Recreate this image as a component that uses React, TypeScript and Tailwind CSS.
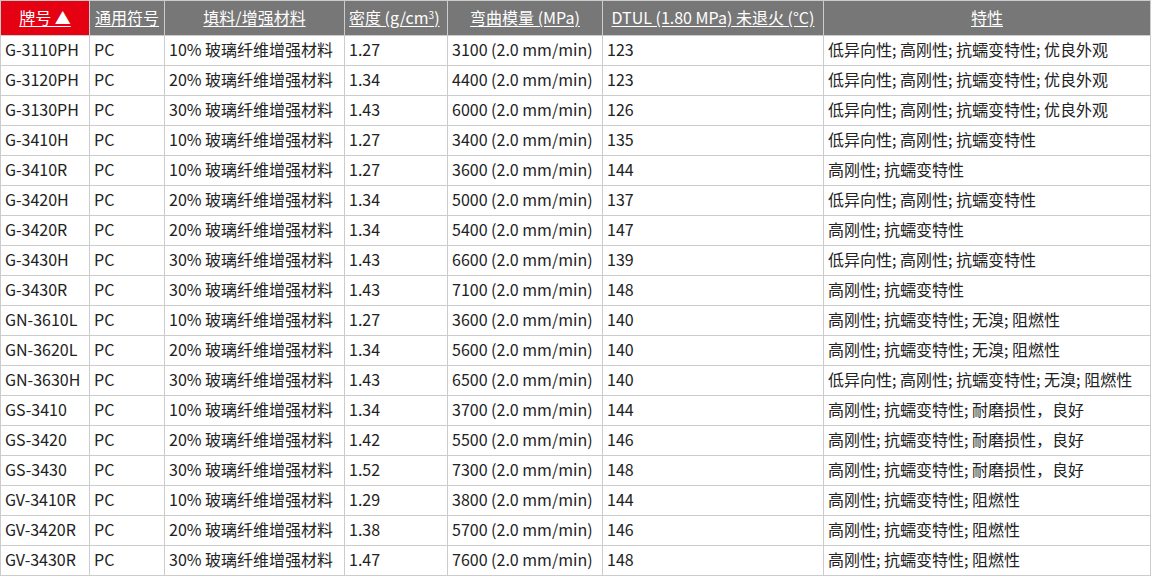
import React from 'react';

const rows: string[][] = [
  ['G-3110PH', 'PC', '10% 玻璃纤维增强材料', '1.27', '3100 (2.0 mm/min)', '123', '低异向性; 高刚性; 抗蠕变特性; 优良外观'],
  ['G-3120PH', 'PC', '20% 玻璃纤维增强材料', '1.34', '4400 (2.0 mm/min)', '123', '低异向性; 高刚性; 抗蠕变特性; 优良外观'],
  ['G-3130PH', 'PC', '30% 玻璃纤维增强材料', '1.43', '6000 (2.0 mm/min)', '126', '低异向性; 高刚性; 抗蠕变特性; 优良外观'],
  ['G-3410H', 'PC', '10% 玻璃纤维增强材料', '1.27', '3400 (2.0 mm/min)', '135', '低异向性; 高刚性; 抗蠕变特性'],
  ['G-3410R', 'PC', '10% 玻璃纤维增强材料', '1.27', '3600 (2.0 mm/min)', '144', '高刚性; 抗蠕变特性'],
  ['G-3420H', 'PC', '20% 玻璃纤维增强材料', '1.34', '5000 (2.0 mm/min)', '137', '低异向性; 高刚性; 抗蠕变特性'],
  ['G-3420R', 'PC', '20% 玻璃纤维增强材料', '1.34', '5400 (2.0 mm/min)', '147', '高刚性; 抗蠕变特性'],
  ['G-3430H', 'PC', '30% 玻璃纤维增强材料', '1.43', '6600 (2.0 mm/min)', '139', '低异向性; 高刚性; 抗蠕变特性'],
  ['G-3430R', 'PC', '30% 玻璃纤维增强材料', '1.43', '7100 (2.0 mm/min)', '148', '高刚性; 抗蠕变特性'],
  ['GN-3610L', 'PC', '10% 玻璃纤维增强材料', '1.27', '3600 (2.0 mm/min)', '140', '高刚性; 抗蠕变特性; 无溴; 阻燃性'],
  ['GN-3620L', 'PC', '20% 玻璃纤维增强材料', '1.34', '5600 (2.0 mm/min)', '140', '高刚性; 抗蠕变特性; 无溴; 阻燃性'],
  ['GN-3630H', 'PC', '30% 玻璃纤维增强材料', '1.43', '6500 (2.0 mm/min)', '140', '低异向性; 高刚性; 抗蠕变特性; 无溴; 阻燃性'],
  ['GS-3410', 'PC', '10% 玻璃纤维增强材料', '1.34', '3700 (2.0 mm/min)', '144', '高刚性; 抗蠕变特性; 耐磨损性，良好'],
  ['GS-3420', 'PC', '20% 玻璃纤维增强材料', '1.42', '5500 (2.0 mm/min)', '146', '高刚性; 抗蠕变特性; 耐磨损性，良好'],
  ['GS-3430', 'PC', '30% 玻璃纤维增强材料', '1.52', '7300 (2.0 mm/min)', '148', '高刚性; 抗蠕变特性; 耐磨损性，良好'],
  ['GV-3410R', 'PC', '10% 玻璃纤维增强材料', '1.29', '3800 (2.0 mm/min)', '144', '高刚性; 抗蠕变特性; 阻燃性'],
  ['GV-3420R', 'PC', '20% 玻璃纤维增强材料', '1.38', '5700 (2.0 mm/min)', '146', '高刚性; 抗蠕变特性; 阻燃性'],
  ['GV-3430R', 'PC', '30% 玻璃纤维增强材料', '1.47', '7600 (2.0 mm/min)', '148', '高刚性; 抗蠕变特性; 阻燃性'],
];

const widths = ['w-[89px]', 'w-[75px]', 'w-[180px]', 'w-[103px]', 'w-[155px]', 'w-[221px]', 'w-[327px]'];

export default function App() {
  return (
    <div className="w-[1151px] h-[577px] bg-white font-['Noto_Sans_CJK_SC',sans-serif] text-[16px] text-[#222]">
      <table className="w-[1150px] table-fixed border-collapse">
        <colgroup>
          {widths.map((w, i) => (
            <col key={i} className={w} />
          ))}
        </colgroup>
        <thead>
          <tr className="h-[35px] text-white">
            <th className="bg-[#e50012] border border-[#cccccc] font-normal text-center px-1 pb-[2px] whitespace-nowrap">
              <span className="underline underline-offset-2">牌号 ▲</span>
            </th>
            {['通用符号', '填料/增强材料'].map((h) => (
              <th key={h} className="bg-[#777777] border border-[#cccccc] font-normal text-center px-1 pb-[2px] whitespace-nowrap">
                <span className="underline underline-offset-2">{h}</span>
              </th>
            ))}
            <th className="bg-[#777777] border border-[#cccccc] font-normal text-left px-1 pb-[2px] whitespace-nowrap">
              <span className="underline underline-offset-2">
                密度 (g/cm<sup className="text-[10px]">3</sup>)
              </span>
            </th>
            {['弯曲模量 (MPa)', 'DTUL (1.80 MPa) 未退火 (°C)', '特性'].map((h) => (
              <th key={h} className="bg-[#777777] border border-[#cccccc] font-normal text-center px-1 pb-[2px] whitespace-nowrap">
                <span className="underline underline-offset-2">{h}</span>
              </th>
            ))}
          </tr>
        </thead>
        <tbody>
          {rows.map((r) => (
            <tr key={r[0]} className="h-[30px]">
              {r.map((c, i) => (
                <td key={i} className="border border-[#cccccc] px-1 pb-[3px] whitespace-nowrap leading-none">
                  {c}
                </td>
              ))}
            </tr>
          ))}
        </tbody>
      </table>
    </div>
  );
}
